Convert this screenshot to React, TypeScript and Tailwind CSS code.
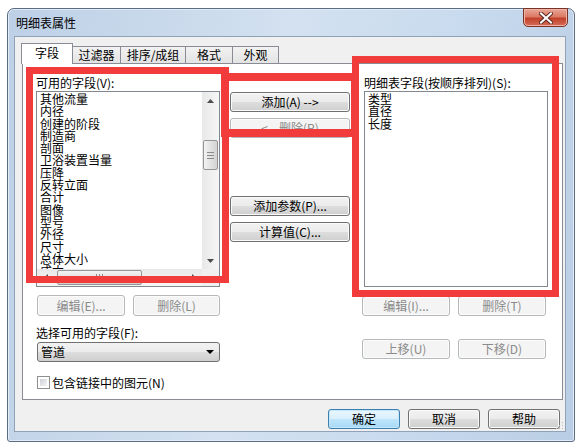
import React from 'react';

const availableFields = [
  '其他流量',
  '内径',
  '创建的阶段',
  '制造商',
  '剖面',
  '卫浴装置当量',
  '压降',
  '反转立面',
  '合计',
  '图像',
  '型号',
  '外径',
  '尺寸',
  '总体大小',
  '成本',
];

const scheduleFields = ['类型', '直径', '长度'];

interface BtnProps {
  label: string;
  disabled?: boolean;
  primary?: boolean;
  className?: string;
}

const Btn: React.FC<BtnProps> = ({ label, disabled, primary, className = '' }) => {
  let tone =
    'border-[#707070] text-black bg-[linear-gradient(#f2f2f2_0%,#ebebeb_50%,#dddddd_51%,#cfcfcf_100%)] shadow-[inset_0_0_0_1px_#fbfbfb]';
  if (disabled) tone = 'border-[#b5b9bc] text-[#8a8a8a] bg-[#f4f4f4] shadow-[inset_0_0_0_1px_#fcfcfc]';
  if (primary)
    tone =
      'border-[#3c7fb1] text-black bg-[linear-gradient(#eaf6fd_0%,#d9f0fc_50%,#bee6fd_51%,#a7d9f5_100%)] shadow-[inset_0_0_0_1px_#c6e6f9]';
  return (
    <div className={`flex items-center justify-center rounded-[3px] border text-[12px] leading-none ${tone} ${className}`}>
      {label}
    </div>
  );
};

const Arrow: React.FC<{ dir: 'up' | 'down' | 'left' | 'right' }> = ({ dir }) => {
  const pts = {
    up: '0,4 7,4 3.5,0',
    down: '0,0 7,0 3.5,4',
    left: '4,0 4,7 0,3.5',
    right: '0,0 0,7 4,3.5',
  }[dir];
  const vert = dir === 'up' || dir === 'down';
  return (
    <svg width={vert ? 7 : 4} height={vert ? 4 : 7} viewBox={vert ? '0 0 7 4' : '0 0 4 7'}>
      <polygon points={pts} fill="#4d4d4d" />
    </svg>
  );
};

const AvailableList: React.FC = () => (
  <div className="flex h-[196px] w-[184px] flex-col border border-[#828790] bg-white">
    <div className="flex h-[177px]">
      <div className="flex-1 overflow-hidden pl-[3px] pt-[1px] text-[12px] leading-[12.3px] text-black">
        {availableFields.map((f) => (
          <div key={f} className="whitespace-nowrap">
            {f}
          </div>
        ))}
      </div>
      <div className="flex w-[17px] flex-col bg-[linear-gradient(90deg,#e8e8e8,#f6f6f6)]">
        <div className="flex h-[17px] items-center justify-center">
          <Arrow dir="up" />
        </div>
        <div className="flex-1 px-[1px] pt-[31px]">
          <div className="flex h-[30px] flex-col items-center justify-center gap-[2px] rounded-[2px] border border-[#959595] bg-[linear-gradient(90deg,#f3f3f3,#e2e2e2_50%,#d3d3d3)]">
            <div className="h-px w-[7px] bg-[#8a8a8a]" />
            <div className="h-px w-[7px] bg-[#8a8a8a]" />
            <div className="h-px w-[7px] bg-[#8a8a8a]" />
          </div>
        </div>
        <div className="flex h-[17px] items-center justify-center">
          <Arrow dir="down" />
        </div>
      </div>
    </div>
    <div className="flex h-[17px]">
      <div className="flex flex-1 bg-[linear-gradient(#e8e8e8,#f6f6f6)]">
        <div className="flex w-[17px] items-center justify-center">
          <Arrow dir="left" />
        </div>
        <div className="flex-1 py-[1px] pl-[3px] pr-[43px]">
          <div className="flex h-full items-center justify-center gap-[2px] rounded-[2px] border border-[#959595] bg-[linear-gradient(#f3f3f3,#e2e2e2_50%,#d3d3d3)]">
            <div className="h-[7px] w-px bg-[#8a8a8a]" />
            <div className="h-[7px] w-px bg-[#8a8a8a]" />
            <div className="h-[7px] w-px bg-[#8a8a8a]" />
          </div>
        </div>
        <div className="flex w-[17px] items-center justify-center">
          <Arrow dir="right" />
        </div>
      </div>
      <div className="w-[17px] bg-[#f0f0f0]" />
    </div>
  </div>
);

const tabs = [
  { label: '字段', w: 'w-[52px]' },
  { label: '过滤器', w: 'w-[49px]' },
  { label: '排序/成组', w: 'w-[66px]' },
  { label: '格式', w: 'w-[48px]' },
  { label: '外观', w: 'w-[47px]' },
];

export default function App() {
  return (
    <div className="relative h-[443px] w-[584px] overflow-hidden bg-white pl-[7px] pt-[8px] font-['Noto_Sans_CJK_SC','Liberation_Sans',sans-serif] text-[12px]">
      {/* window */}
      <div className="flex h-[434px] w-[568px] flex-col rounded-t-[7px] rounded-b-[3px] border border-[#5a6d84] bg-[linear-gradient(100deg,#bdd0e6_0%,#d3e1f0_45%,#c9dbee_70%,#b9cde4_100%)] shadow-[inset_0_0_0_1px_#e4edf7]">
        {/* title bar */}
        <div className="flex h-[27px] shrink-0 items-start justify-between">
          <div className="self-center pl-[8px] text-[12px] text-black">明细表属性</div>
          <div className="-mt-px mr-[6px] flex h-[19px] w-[45px] items-center justify-center rounded-b-[5px] border border-[#7a3326] bg-[linear-gradient(#e9a696_0%,#dc7a66_45%,#c2412b_55%,#d66d58_100%)] shadow-[inset_0_0_0_1px_#efb3a6]">
            <svg width="14" height="12" viewBox="0 0 14 12">
              <path d="M2 1.5 L12 10.5 M12 1.5 L2 10.5" stroke="#5c2a22" strokeWidth="4" strokeLinecap="square" />
              <path d="M2 1.5 L12 10.5 M12 1.5 L2 10.5" stroke="#ffffff" strokeWidth="2" strokeLinecap="square" />
            </svg>
          </div>
        </div>

        {/* client area */}
        <div className="relative mb-[9px] ml-[6px] mr-[8px] flex flex-1 flex-col border border-[#8fa2b8] bg-[#f0f0f0] pl-[6px] pt-[6px]">
          {/* tab strip */}
          <div className="flex h-[20px] items-end">
            {tabs.map((t, i) =>
              i === 0 ? (
                <div
                  key={t.label}
                  className={`relative z-10 -mb-px flex h-[21px] ${t.w} items-center justify-center border border-b-0 border-[#898c95] bg-white pb-[2px] text-black`}
                >
                  {t.label}
                </div>
              ) : (
                <div
                  key={t.label}
                  className={`-ml-px flex h-[17px] ${t.w} items-center justify-center border border-b-0 border-[#898c95] bg-[linear-gradient(#f2f2f2,#e3e3e3)] text-black`}
                >
                  {t.label}
                </div>
              ),
            )}
          </div>

          {/* tab panel */}
          <div className="ml-px flex h-[337px] w-[541px] border border-[#898c95] bg-white pl-[13px] pt-[11px]">
            {/* left column */}
            <div className="flex w-[184px] flex-col">
              <div className="h-[16px] leading-[16px]">可用的字段(V):</div>
              <AvailableList />
              <div className="mt-[8px] flex gap-[8px] pl-px">
                <Btn label="编辑(E)..." disabled className="h-[21px] w-[88px]" />
                <Btn label="删除(L)" disabled className="h-[21px] w-[87px]" />
              </div>
              <div className="mt-[10px] h-[14px] leading-[14px]">选择可用的字段(F):</div>
              <div className="ml-px mt-[2px] flex h-[20px] w-[183px] items-center justify-between rounded-[3px] border border-[#707070] bg-[linear-gradient(#f2f2f2_0%,#ebebeb_50%,#dddddd_51%,#cfcfcf_100%)] pl-[3px] pr-[5px] text-black">
                <span>管道</span>
                <svg width="8" height="4" viewBox="0 0 8 4">
                  <polygon points="0,0 8,0 4,4" fill="#000" />
                </svg>
              </div>
              <div className="ml-px mt-[14px] flex h-[13px] items-center gap-[2px]">
                <div className="h-[13px] w-[13px] border border-[#8e8f8f] bg-white p-[2px]">
                  <div className="h-full w-full bg-[linear-gradient(135deg,#cbcfd5,#f6f6f6)]" />
                </div>
                <span className="leading-[13px]">包含链接中的图元(N)</span>
              </div>
            </div>

            {/* middle column */}
            <div className="ml-[10px] flex w-[120px] flex-col pt-[17px]">
              <Btn label="添加(A) -->" className="h-[20px] w-full" />
              <Btn label="<-- 删除(R)" disabled className="mt-[6px] h-[20px] w-full" />
              <Btn label="添加参数(P)..." className="mt-[58px] h-[20px] w-full" />
              <Btn label="计算值(C)..." className="mt-[6px] h-[20px] w-full" />
            </div>

            {/* right column */}
            <div className="ml-[14px] flex w-[184px] flex-col">
              <div className="h-[16px] leading-[16px]">明细表字段(按顺序排列)(S):</div>
              <div className="h-[196px] w-[184px] border border-[#828790] bg-white pl-[3px] pt-[1px] text-[12px] leading-[12.3px]">
                {scheduleFields.map((f) => (
                  <div key={f}>{f}</div>
                ))}
              </div>
              <div className="-ml-[2px] mt-[9px] flex gap-[8px]">
                <Btn label="编辑(I)..." disabled className="h-[20px] w-[88px]" />
                <Btn label="删除(T)" disabled className="h-[20px] w-[88px]" />
              </div>
              <div className="-ml-[2px] mt-[23px] flex gap-[8px]">
                <Btn label="上移(U)" disabled className="h-[20px] w-[88px]" />
                <Btn label="下移(D)" disabled className="h-[20px] w-[88px]" />
              </div>
            </div>
          </div>

          {/* dialog buttons */}
          <div className="mt-[9px] flex justify-end gap-[8px] pr-[5px]">
            <Btn label="确定" primary className="h-[20px] w-[72px]" />
            <Btn label="取消" className="h-[20px] w-[72px]" />
            <Btn label="帮助" className="h-[20px] w-[72px]" />
          </div>

          {/* resize grip */}
          <svg className="absolute bottom-[1px] right-[1px]" width="8" height="8" viewBox="0 0 8 8">
            <rect x="6" y="0" width="1" height="1" fill="#b8b8b8" />
            <rect x="3" y="3" width="1" height="1" fill="#b8b8b8" />
            <rect x="6" y="3" width="1" height="1" fill="#b8b8b8" />
            <rect x="0" y="6" width="1" height="1" fill="#b8b8b8" />
            <rect x="3" y="6" width="1" height="1" fill="#b8b8b8" />
            <rect x="6" y="6" width="1" height="1" fill="#b8b8b8" />
          </svg>
        </div>
      </div>

      {/* red annotation boxes */}
      <div className="absolute left-[26px] top-[67px] h-[216px] w-[203px] border-[7px] border-[#f23b3b]" />
      <div className="absolute left-[221px] top-[73px] h-[64px] w-[138px] border-[8px] border-[#f23b3b]" />
      <div className="absolute left-[352px] top-[56px] h-[241px] w-[207px] border-[7px] border-[#f23b3b]" />
    </div>
  );
}
